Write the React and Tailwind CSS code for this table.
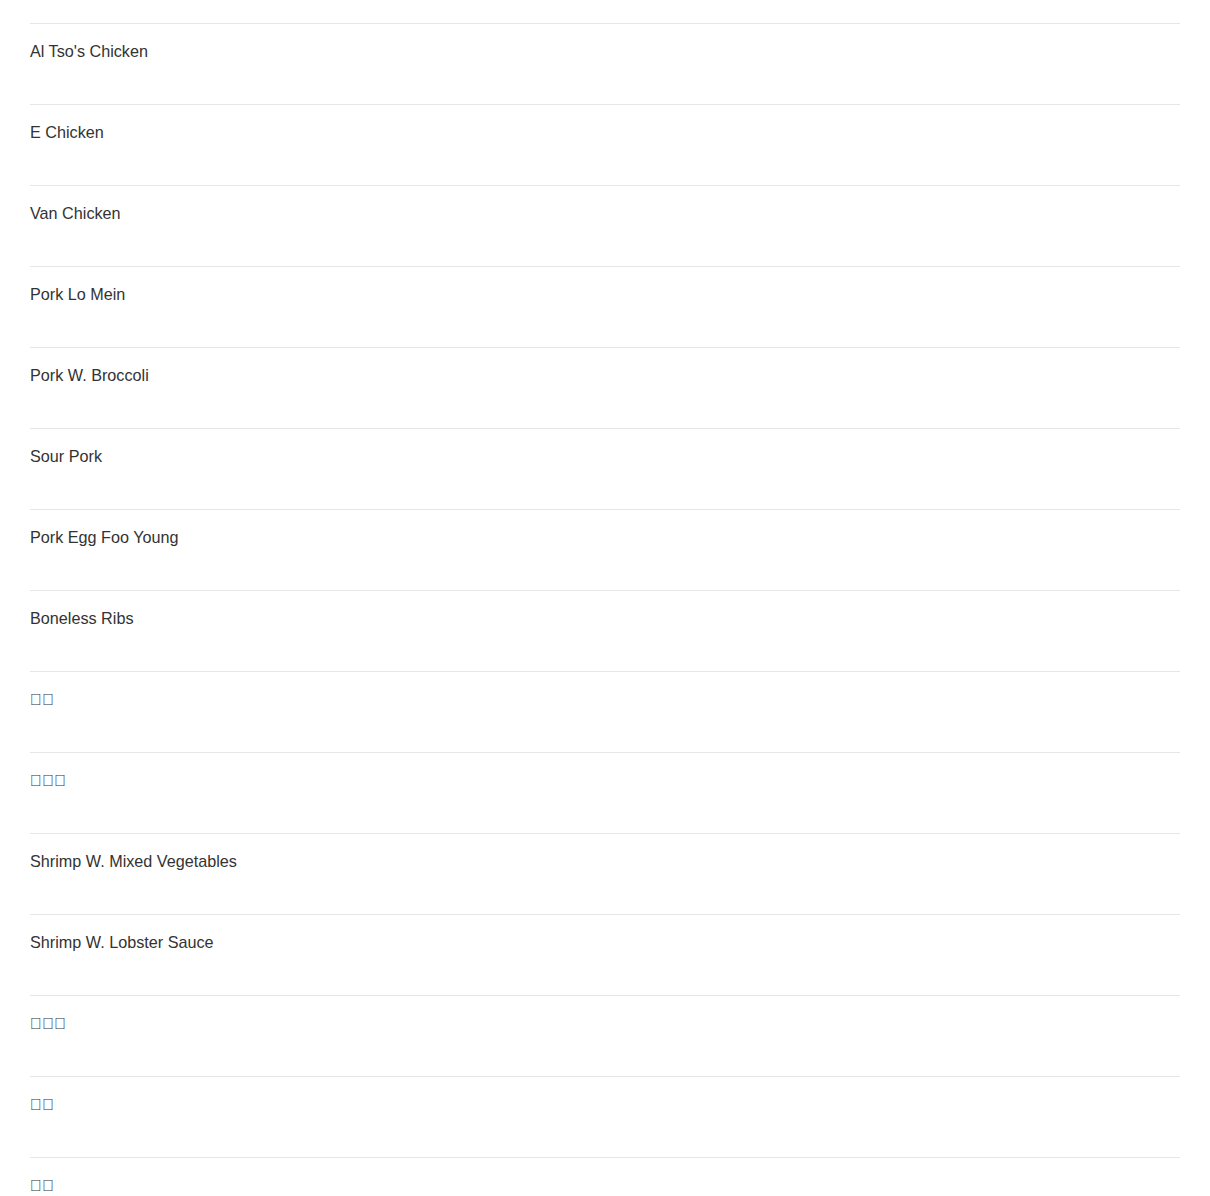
const items = [
  "Al Tso's Chicken",
  'E Chicken',
  'Van Chicken',
  'Pork Lo Mein',
  'Pork W. Broccoli',
  'Sour Pork',
  'Pork Egg Foo Young',
  'Boneless Ribs',
  '\uE000\uE001',
  '\uE000\uE001\uE002',
  'Shrimp W. Mixed Vegetables',
  'Shrimp W. Lobster Sauce',
  '\uE000\uE001\uE002',
  '\uE000\uE001',
  '\uE000\uE001',
]

export default function App() {
  return (
    <div className="min-h-screen bg-white px-[30px] pt-[23px]" style={{ fontFamily: '"Liberation Sans", Arial, sans-serif' }}>
      <ul>
        {items.map((name, i) => (
          <li key={i} className="h-[81px] border-t border-[#e6e6e6] pt-[15px]">
            <div className="text-[16.2px] leading-6 text-[#333]">{name}</div>
          </li>
        ))}
      </ul>
    </div>
  )
}
